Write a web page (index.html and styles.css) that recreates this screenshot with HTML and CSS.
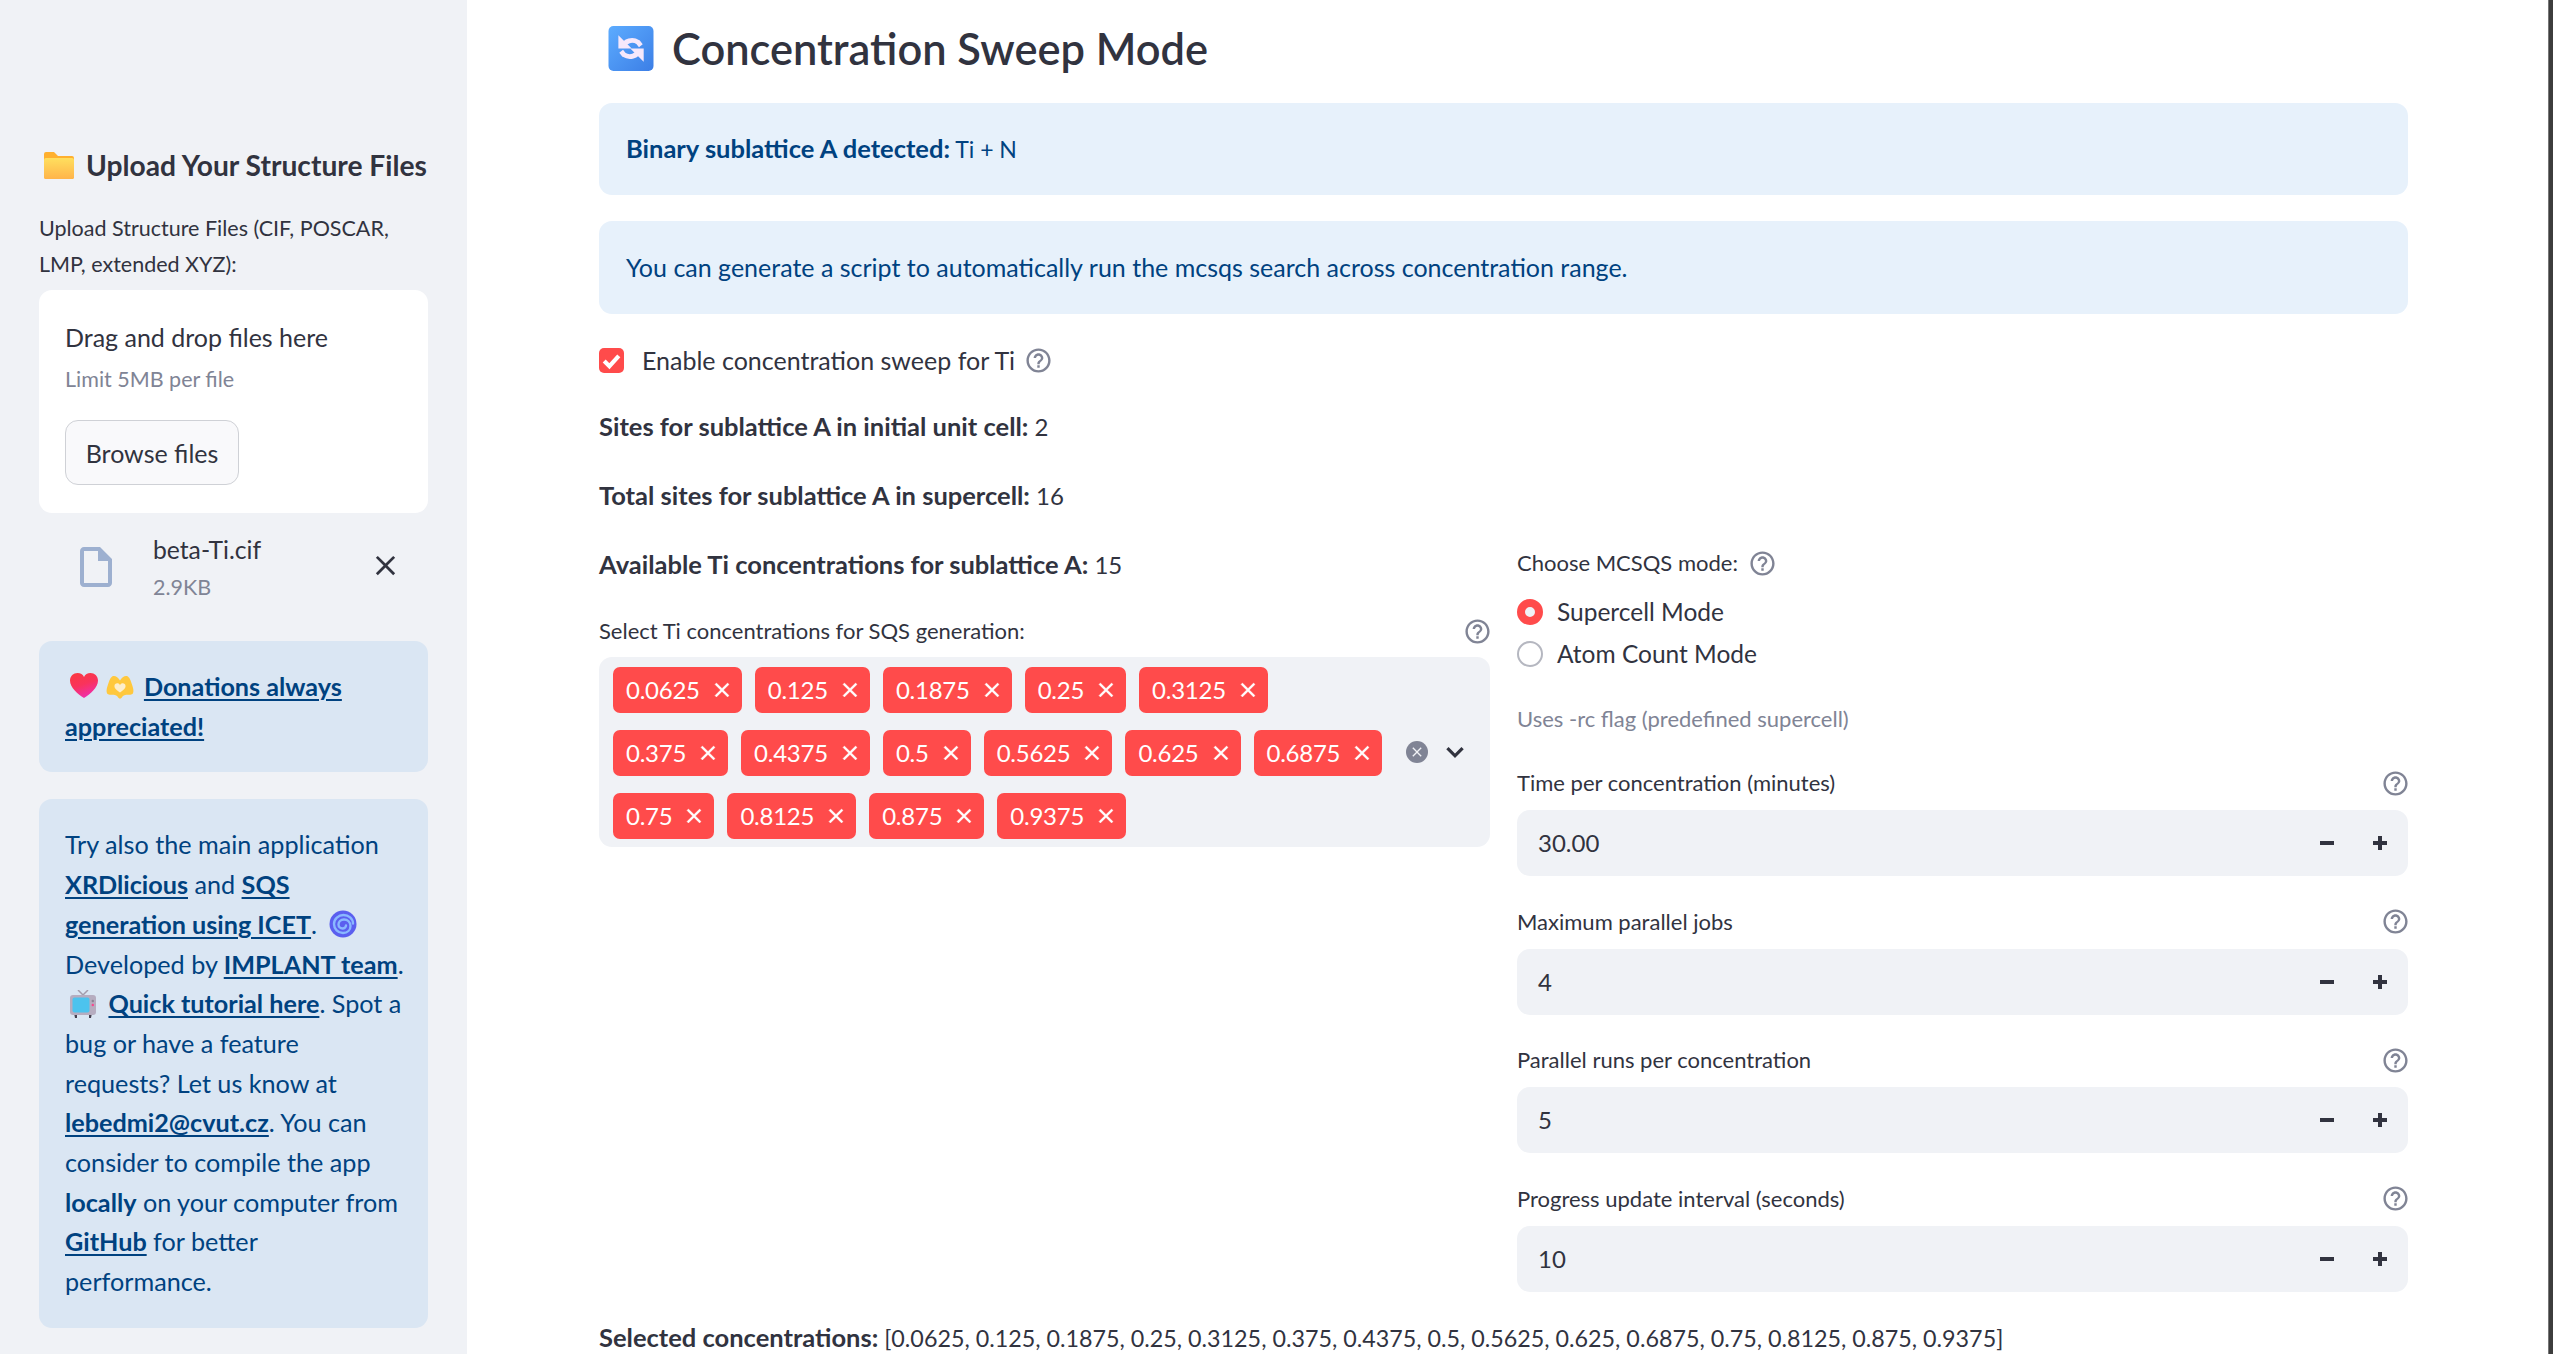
FILE: index.html
```html
<!DOCTYPE html>
<html lang="en">
<head>
<meta charset="utf-8">
<title>Concentration Sweep Mode</title>
<link rel="stylesheet" href="styles.css">
</head>
<body>
<svg class="defs" width="0" height="0" aria-hidden="true">
  <symbol id="help" viewBox="0 0 24 24"><path d="M11 18h2v-2h-2v2zm1-16C6.48 2 2 6.48 2 12s4.48 10 10 10 10-4.48 10-10S17.52 2 12 2zm0 18c-4.41 0-8-3.59-8-8s3.59-8 8-8 8 3.59 8 8-3.59 8-8 8zm0-14c-2.21 0-4 1.79-4 4h2c0-1.1.9-2 2-2s2 .9 2 2c0 2-3 1.75-3 5h2c0-2.25 3-2.5 3-5 0-2.21-1.79-4-4-4z"/></symbol>
  <symbol id="close" viewBox="0 0 24 24"><path d="M19 6.41 17.59 5 12 10.59 6.41 5 5 6.41 10.59 12 5 17.59 6.41 19 12 13.41 17.59 19 19 17.59 13.41 12z"/></symbol>
  <symbol id="minus" viewBox="0 0 14 14"><rect y="5" width="14" height="4"/></symbol>
  <symbol id="plus" viewBox="0 0 14 14"><rect y="5" width="14" height="4"/><rect x="5" width="4" height="14"/></symbol>
</svg>
<aside class="sidebar">
  <h3 class="side-title">
    <svg class="emoji-folder" viewBox="0 0 30 27"><defs><linearGradient id="fg" x1="0" y1="0" x2="0" y2="1"><stop offset="0" stop-color="#ffdf5e"/><stop offset="1" stop-color="#ffb44a"/></linearGradient></defs><path d="M0 2a2 2 0 0 1 2-2h8l4 4h14a2 2 0 0 1 2 2v19a2 2 0 0 1-2 2H2a2 2 0 0 1-2-2z" fill="#ffb02e"/><path d="M0 8a2 2 0 0 1 2-2h26a2 2 0 0 1 2 2v17a2 2 0 0 1-2 2H2a2 2 0 0 1-2-2z" fill="url(#fg)"/></svg>
    Upload Your Structure Files
  </h3>
  <p class="upload-label">Upload Structure Files (CIF, POSCAR,<br>LMP, extended XYZ):</p>
  <section class="dropzone">
    <div class="drop-title">Drag and drop files here</div>
    <div class="drop-limit">Limit 5MB per file</div>
    <button class="browse">Browse files</button>
  </section>
  <div class="file-row">
    <svg class="file-icon" viewBox="0 0 24 24"><path d="M14 2H6c-1.1 0-1.99.9-1.99 2L4 20c0 1.1.89 2 1.99 2H18c1.100 0 2-.9 2-2V8l-6-6zM6 20V4h7v5h5v11H6z"/></svg>
    <div class="file-info">
      <div class="file-name">beta-Ti.cif</div>
      <div class="file-size">2.9KB</div>
    </div>
    <svg class="file-close"><use href="#close"/></svg>
  </div>
  <div class="side-note">
    <svg class="emoji emoji-first" viewBox="0 0 28 26"><defs><linearGradient id="hg" x1="0" y1="0" x2="0.4" y2="1"><stop offset="0" stop-color="#fb3a3e"/><stop offset="0.55" stop-color="#f9335c"/><stop offset="1" stop-color="#f02fa6"/></linearGradient></defs><path d="M14 25C8 21 0 15 0 7.500 0 3 3.500 0 7.500 0 10.500 0 13 1.500 14 4c1-2.500 3.500-4 6.500-4C24.500 0 28 3 28 7.500 28 15 20 21 14 25z" fill="url(#hg)"/></svg>
    <svg class="emoji emoji-hands" viewBox="0 0 30 26"><path d="M15 6C13 2 9 0 6.500 1.500 4 3 3 7 1.500 12 .5 15 0 18 1 20c1 1.500 4 1.500 7 1.500 2 0 4 1 5 3 1 1.500 3 1.500 4 0 1-2 3-3 5-3 3 0 6 0 7-1.500 1-2 .5-5-.5-8-1.500-5-2.500-9-5-10.500C21 0 17 2 15 6z" fill="#ffc83d"/><path d="M15 19c-3-2-6-4-6-7 0-2 1.500-3 3-3 1.300 0 2.400.7 3 2 .6-1.300 1.700-2 3-2 1.500 0 3 1 3 3 0 3-3 5-6 7z" fill="#fdeecb"/></svg>
    <a href="#">Donations always<br>appreciated!</a>
  </div>
  <div class="side-note">
    Try also the main application<br>
    <a href="#">XRDlicious</a> and <a href="#">SQS<br>generation using ICET</a>.
    <svg class="emoji emoji-cyclone" viewBox="0 0 28 28"><circle cx="14" cy="14" r="13.500" fill="#5b5fef"/><path d="M24 13.500C24 8.500 19.500 5 14.500 5 9.500 5 5 9 5 14c0 5 4 9 9 9 4.500 0 7.500-3 7.500-7s-3-6.500-6.500-6.500-5.500 2.500-5.500 5 2 4 4 4 3.500-1.500 3.500-3" fill="none" stroke="#8ab8ff" stroke-width="2.400" stroke-linecap="round"/></svg><br>
    Developed by <a href="#">IMPLANT team</a>.<br>
    <svg class="emoji emoji-tv" viewBox="0 0 26 28"><path d="M8 0l5 5 5-5" fill="none" stroke="#a39cab" stroke-width="1.500"/><path d="M4 23h3v5H5zM19 23h3l-1 5h-2z" fill="#45404f"/><rect y="5" width="26" height="20" rx="3" fill="#b6adc0"/><rect x="2.500" y="7.500" width="17" height="15" rx="2" fill="#4cc3ee"/><circle cx="22.800" cy="11" r="1.200" fill="#8b8494"/><circle cx="22.800" cy="15" r="1.200" fill="#f8468e"/></svg>
    <a href="#">Quick tutorial here</a>. Spot a<br>
    bug or have a feature<br>
    requests? Let us know at<br>
    <a href="#">lebedmi2@cvut.cz</a>. You can<br>
    consider to compile the app<br>
    <strong>locally</strong> on your computer from<br>
    <a href="#">GitHub</a> for better<br>
    performance.
  </div>
</aside>

<main class="main">
  <h2 class="page-title">
    <svg class="emoji-refresh" viewBox="0 0 32 32"><defs><linearGradient id="rg" x1="0" y1="0" x2="1" y2="1"><stop offset="0" stop-color="#5cacff"/><stop offset="1" stop-color="#3c7ee6"/></linearGradient></defs><rect width="32" height="32" rx="3.500" fill="url(#rg)"/><path d="M10.500 14.500C11.500 10.500 17 9 21 11.500l2 2.500" fill="none" stroke="#f6e8fb" stroke-width="3.400"/><path d="M7 6.500V16h9.500z" fill="#f6e8fb"/><path d="M21.500 17.500C20.500 21.500 15 23 11 20.500L9 18" fill="none" stroke="#f6e8fb" stroke-width="3.400"/><path d="M25 25.500V16h-9.500z" fill="#f6e8fb"/></svg>
    Concentration Sweep Mode
  </h2>
  <div class="info info-short"><strong>Binary sublattice A detected:</strong> Ti + N</div>
  <div class="info">You can generate a script to automatically run the mcsqs search across concentration range.</div>
  <label class="check-row">
    <span class="checkbox"><svg viewBox="0 0 24 24"><path d="M5 12.500l5 5 9-10" fill="none" stroke="#fff" stroke-width="4"/></svg></span>
    Enable concentration sweep for Ti
    <svg class="help help-inline"><use href="#help"/></svg>
  </label>
  <p class="stat"><strong>Sites for sublattice A in initial unit cell:</strong> 2</p>
  <p class="stat"><strong>Total sites for sublattice A in supercell:</strong> 16</p>
  <div class="columns">
    <div class="col">
      <p class="stat stat-first"><strong>Available Ti concentrations for sublattice A:</strong> 15</p>
      <div class="label-row label-select"><span>Select Ti concentrations for SQS generation:</span><svg class="help"><use href="#help"/></svg></div>
      <div class="multiselect">
        <div class="tags">
          <span class="tag">0.0625<svg><use href="#close"/></svg></span>
          <span class="tag">0.125<svg><use href="#close"/></svg></span>
          <span class="tag">0.1875<svg><use href="#close"/></svg></span>
          <span class="tag">0.25<svg><use href="#close"/></svg></span>
          <span class="tag">0.3125<svg><use href="#close"/></svg></span>
          <span class="tag">0.375<svg><use href="#close"/></svg></span>
          <span class="tag">0.4375<svg><use href="#close"/></svg></span>
          <span class="tag">0.5<svg><use href="#close"/></svg></span>
          <span class="tag">0.5625<svg><use href="#close"/></svg></span>
          <span class="tag">0.625<svg><use href="#close"/></svg></span>
          <span class="tag">0.6875<svg><use href="#close"/></svg></span>
          <span class="tag">0.75<svg><use href="#close"/></svg></span>
          <span class="tag">0.8125<svg><use href="#close"/></svg></span>
          <span class="tag">0.875<svg><use href="#close"/></svg></span>
          <span class="tag">0.9375<svg><use href="#close"/></svg></span>
        </div>
        <div class="ms-controls">
          <span class="clear"><svg><use href="#close"/></svg></span>
          <svg class="chevron" viewBox="0 0 24 24"><path d="M5 8.500l7 7 7-7" fill="none" stroke="#31333f" stroke-width="3"/></svg>
        </div>
      </div>
    </div>
    <div class="col">
      <div class="label-row label-mode"><span>Choose MCSQS mode:</span><svg class="help"><use href="#help"/></svg></div>
      <div class="radio"><span class="dot dot-on"></span>Supercell Mode</div>
      <div class="radio"><span class="dot"></span>Atom Count Mode</div>
      <p class="caption">Uses -rc flag (predefined supercell)</p>
      <div class="field">
        <div class="label-row"><span>Time per concentration (minutes)</span><svg class="help"><use href="#help"/></svg></div>
        <div class="number"><span>30.00</span><svg class="step step-minus"><use href="#minus"/></svg><svg class="step"><use href="#plus"/></svg></div>
      </div>
      <div class="field">
        <div class="label-row"><span>Maximum parallel jobs</span><svg class="help"><use href="#help"/></svg></div>
        <div class="number"><span>4</span><svg class="step step-minus"><use href="#minus"/></svg><svg class="step"><use href="#plus"/></svg></div>
      </div>
      <div class="field">
        <div class="label-row"><span>Parallel runs per concentration</span><svg class="help"><use href="#help"/></svg></div>
        <div class="number"><span>5</span><svg class="step step-minus"><use href="#minus"/></svg><svg class="step"><use href="#plus"/></svg></div>
      </div>
      <div class="field">
        <div class="label-row"><span>Progress update interval (seconds)</span><svg class="help"><use href="#help"/></svg></div>
        <div class="number"><span>10</span><svg class="step step-minus"><use href="#minus"/></svg><svg class="step"><use href="#plus"/></svg></div>
      </div>
    </div>
  </div>
  <p class="selected"><strong>Selected concentrations:</strong> [0.0625, 0.125, 0.1875, 0.25, 0.3125, 0.375, 0.4375, 0.5, 0.5625, 0.625, 0.6875, 0.75, 0.8125, 0.875, 0.9375]</p>
</main>
<div class="scrollbar"></div>
</body>
</html>
```
FILE: styles.css
```css
* { box-sizing: border-box; }
html, body { height: 100%; }
body {
  margin: 0;
  display: flex;
  overflow: hidden;
  height: 100vh;
  background: #fff;
  color: #31333f;
  font-family: "Lato", "Noto Sans", sans-serif;
  font-size: 25px;
  line-height: 40px;
}
.defs { position: absolute; }
p, h2, h3 { margin: 0; }
strong { font-weight: 700; }

.sidebar {
  flex: 0 0 467px;
  width: 467px;
  min-width: 0;
  background: #f0f2f6;
  padding: 135px 39px 0;
  height: 100%;
}
.side-title {
  display: flex;
  align-items: center;
  gap: 12px;
  font-size: 28.2px;
  font-weight: 700;
  line-height: 60px;
  white-space: nowrap;
  margin-left: 5px;
}
.emoji-folder { width: 30px; height: 27px; }
.upload-label { margin-top: 15px; font-size: 21.5px; line-height: 36px; white-space: nowrap; }
.dropzone {
  margin-top: 8px;
  height: 223px;
  background: #fff;
  border-radius: 13px;
  padding: 27px 26px 0;
}
.drop-title { line-height: 40px; }
.drop-limit { margin-top: 5px; font-size: 21.5px; line-height: 34px; color: #808495; }
.browse {
  display: block;
  margin-top: 24px;
  width: 174px;
  height: 65px;
  background: #f9f9fb;
  border: 1px solid #cfd1d6;
  border-radius: 13px;
  color: #31333f;
  font: inherit;
}
.file-row { display: flex; align-items: flex-start; height: 90px; margin-top: 14px; padding-left: 33px; }
.file-icon { width: 48px; height: 48px; margin-top: 16px; fill: #9db0d0; flex: none; }
.file-info { margin-left: 33px; padding-top: 3px; }
.file-name { line-height: 40px; font-size: 24.7px; }
.file-size { font-size: 21.5px; line-height: 34px; color: #808495; }
.file-close { width: 33px; height: 33px; margin: 22px 0 0 auto; margin-right: 26px; fill: #31333f; }

.side-note {
  margin-top: 27px;
  padding: 26px;
  border-radius: 13px;
  background: #dae6f3;
  color: #004280;
  font-size: 25.2px;
  line-height: 39.7px;
  white-space: nowrap;
}
.file-row + .side-note { margin-top: 24px; }
.side-note a { color: #004280; font-weight: 700; text-underline-offset: 3px; text-decoration-thickness: 2px; }
.emoji { display: inline-block; vertical-align: -3px; }
.emoji-first { width: 28px; height: 26px; margin-left: 5px; }
.emoji-hands { width: 28px; height: 24px; margin: 0 3px 0 2px; }
.emoji-cyclone { width: 28px; height: 28px; margin-left: 6px; vertical-align: -4px; }
.emoji-tv { width: 26px; height: 28px; margin: 0 6px 0 5px; vertical-align: -5px; }

.main { flex: 1; padding: 18px 145px 0 132px; min-width: 0; }
.main strong { font-size: 25.5px; line-height: 1; }
.page-title {
  display: flex;
  align-items: center;
  gap: 18px;
  font-size: 43.4px;
  font-weight: 600;
  line-height: 60px;
  margin-left: 9px;
  white-space: nowrap;
}
.emoji-refresh { width: 46px; height: 45px; }
.info {
  margin-top: 25px;
  padding: 26px 27px;
  border-radius: 13px;
  background: #e7f1fb;
  color: #004280;
}
.info-short { font-size: 23px; }
.info + .info { margin-top: 26px; padding-bottom: 27px; }
.check-row { display: flex; align-items: center; height: 40px; margin-top: 26px; }
.checkbox {
  width: 25px;
  height: 25px;
  margin-right: 18px;
  border-radius: 5px;
  background: #ff4b4b;
  display: flex;
}
.help { width: 29px; height: 29px; fill: #808495; flex: none; }
.label-row .help { margin-right: -2px; }
.help-inline { margin-left: 9px; }
.stat { margin-top: 29.8px; font-size: 24px; }
.check-row + .stat { margin-top: 26.6px; }
.columns { display: grid; grid-template-columns: 891px 891px; column-gap: 27px; margin-top: 28.8px; }
.stat-first { margin-top: 0; }
.label-row {
  display: flex;
  justify-content: space-between;
  align-items: center;
  font-size: 22px;
  line-height: 36px;
  height: 36px;
  white-space: nowrap;
}
.label-select { margin-top: 28px; }
.label-mode { justify-content: flex-start; gap: 10px; }
.multiselect {
  display: flex;
  margin-top: 8px;
  height: 190px;
  background: #f0f2f6;
  border-radius: 13px;
  padding: 10px 0 0 14px;
}
.tags { display: flex; flex-wrap: wrap; align-content: flex-start; gap: 17px 13px; width: 780px; }
.tag {
  display: inline-flex;
  align-items: center;
  height: 46px;
  padding: 0 13px;
  gap: 10px;
  border-radius: 7px;
  background: #ff4b4b;
  color: #fff;
  font-size: 24px;
  letter-spacing: -0.25px;
}
.tag svg { width: 24px; height: 24px; fill: #fff; stroke: #fff; stroke-width: 0.4px; margin-right: -5px; }
.ms-controls { display: flex; align-items: center; height: 190px; margin-top: -10px; gap: 14px; padding-left: 13px; }
.clear { width: 22px; height: 22px; border-radius: 50%; background: #808495; display: flex; align-items: center; justify-content: center; }
.clear svg { width: 16px; height: 16px; fill: #f0f2f6; }
.chevron { width: 26px; height: 26px; }

.radio { display: flex; align-items: center; height: 42px; font-size: 24.5px; }
.label-mode + .radio { margin-top: 10px; }
.dot { width: 26px; height: 26px; margin-right: 14px; border-radius: 50%; background: #fff; border: 2px solid #b5b7c0; }
.dot-on { background: #f0f2f6; border: 8px solid #ff4b4b; }
.caption { margin-top: 26px; font-size: 22px; line-height: 36px; color: #808495; }
.field { margin-top: 28px; }
.field + .field { margin-top: 27.6px; }
.field .label-row { height: 36px; }
.number {
  display: flex;
  align-items: center;
  margin-top: 9px;
  height: 66px;
  padding: 0 21px;
  background: #f0f2f6;
  border-radius: 13px;
  font-size: 24px;
}
.number span { margin-right: auto; }
.step { width: 14px; height: 14px; fill: #31333f; }
.step-minus { margin-right: 39px; }
.selected { margin-top: 26px; white-space: nowrap; font-size: 23.3px; }
.scrollbar { position: absolute; top: 0; right: 0; bottom: 0; width: 5px; background: #3d3d3d; border-left: 1px solid #777; }
```
